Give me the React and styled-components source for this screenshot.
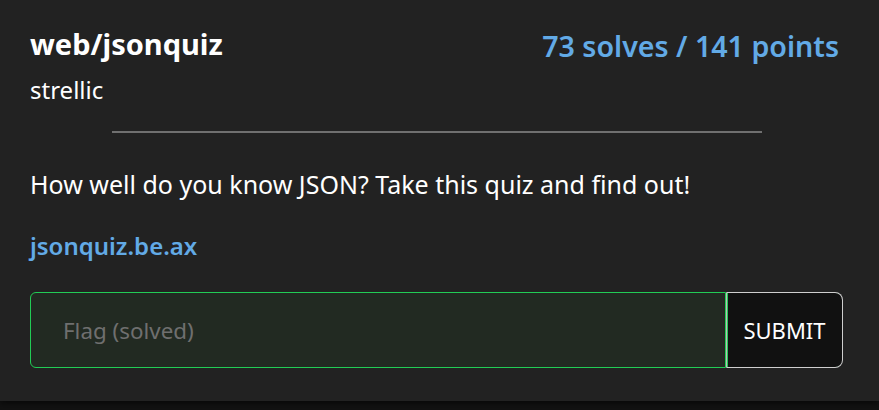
import React from 'react';
import styled, { createGlobalStyle } from 'styled-components';

const Global = createGlobalStyle`
  html, body {
    margin: 0;
    padding: 0;
    background: #111;
    font-family: "Noto Sans", "Open Sans", sans-serif;
  }
`;

const Page = styled.div`
  width: 879px;
  height: 410px;
  background: #121212;
`;

const Card = styled.div`
  box-sizing: border-box;
  width: 879px;
  height: 401px;
  background: #222;
  padding: 24px 40px 0 30px;
  color: #fff;
  box-shadow: 0 3px 6px rgba(0, 0, 0, 0.5);
`;

const Header = styled.div`
  display: flex;
  justify-content: space-between;
  align-items: flex-start;
`;

const Title = styled.h2`
  margin: 0;
  font-size: 29px;
  font-weight: 700;
  line-height: 40px;
  letter-spacing: 0;
`;

const Stats = styled.div`
  font-size: 28.6px;
  font-weight: 600;
  line-height: 44px;
  color: #62aae6;
`;

const Author = styled.div`
  font-size: 24px;
  line-height: 36px;
  margin-top: 8px;
`;

const Divider = styled.hr`
  width: 650px;
  margin: 23px 0 0 82px;
  border: none;
  border-top: 2px solid #707070;
`;

const Description = styled.p`
  margin: 33px 0 0;
  font-size: 25px;
  line-height: 36px;
`;

const Link = styled.a`
  display: inline-block;
  margin-top: 26px;
  font-size: 24px;
  font-weight: 600;
  line-height: 36px;
  color: #62aae6;
  text-decoration: none;
`;

const FlagForm = styled.form`
  display: flex;
  margin-top: 28px;
  width: 813px;
  height: 76px;
`;

const FlagInput = styled.input`
  flex: 1;
  box-sizing: border-box;
  height: 100%;
  background: #222a22;
  border: 1px solid #22cc55;
  border-radius: 6px 0 0 6px;
  padding: 0 32px;
  font-family: inherit;
  font-size: 22.4px;
  color: #fff;
  outline: none;

  &::placeholder {
    color: #6f6f6f;
  }
`;

const SubmitButton = styled.button`
  box-sizing: border-box;
  width: 117px;
  height: 100%;
  background: #111;
  border: 1px solid #cfcfcf;
  border-left: 1px solid #bbb;
  box-shadow: inset 1px 0 0 #22cc55;
  border-radius: 0 8px 8px 0;
  color: #fff;
  font-family: inherit;
  font-size: 22px;
  cursor: pointer;
`;

export default function App() {
  return (
    <Page>
      <Global />
      <Card>
        <Header>
          <div>
            <Title>web/jsonquiz</Title>
            <Author>strellic</Author>
          </div>
          <Stats>73 solves / 141 points</Stats>
        </Header>
        <Divider />
        <Description>How well do you know JSON? Take this quiz and find out!</Description>
        <Link href="#">jsonquiz.be.ax</Link>
        <FlagForm onSubmit={(e) => e.preventDefault()}>
          <FlagInput placeholder="Flag (solved)" />
          <SubmitButton type="submit">SUBMIT</SubmitButton>
        </FlagForm>
      </Card>
    </Page>
  );
}
